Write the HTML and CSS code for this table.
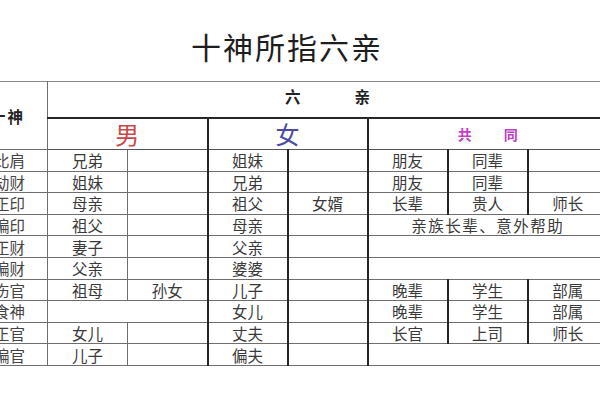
FILE: index.html
```html
<!DOCTYPE html>
<html lang="zh">
<head>
<meta charset="utf-8">
<link rel="stylesheet" href="styles.css">
</head>
<body>
<div class="sheet">
  <h1 class="title">十神所指六亲</h1>
  <table class="grid">
    <colgroup>
      <col class="c"><col class="c"><col class="c"><col class="c"><col class="c"><col class="c"><col class="c"><col class="c">
    </colgroup>
    <tr class="h1">
      <td class="label-hd" rowspan="2">十神</td>
      <td class="liuqin" colspan="7"><span class="lq">六</span><span>亲</span></td>
    </tr>
    <tr class="h2">
      <td class="male" colspan="2">男</td>
      <td class="female tl" colspan="2">女</td>
      <td class="common tl" colspan="3"><span class="gt">共</span><span>同</span></td>
    </tr>
    <tr class="r">
      <td class="lab">比肩</td><td class="tn">兄弟</td><td></td>
      <td class="tl">姐妹</td><td class="tl"></td>
      <td class="tl">朋友</td><td class="tl">同辈</td><td class="tl"></td>
    </tr>
    <tr class="r">
      <td class="lab">劫财</td><td class="tn">姐妹</td><td></td>
      <td class="tl">兄弟</td><td class="tl"></td>
      <td class="tl">朋友</td><td class="tl">同辈</td><td class="tl"></td>
    </tr>
    <tr class="r">
      <td class="lab">正印</td><td class="tn">母亲</td><td></td>
      <td class="tl">祖父</td><td class="tl">女婿</td>
      <td class="tl">长辈</td><td class="tl">贵人</td><td class="tl">师长</td>
    </tr>
    <tr class="r">
      <td class="lab">偏印</td><td class="tn">祖父</td><td></td>
      <td class="tl">母亲</td><td class="tl"></td>
      <td class="tl wide" colspan="3">亲族长辈、意外帮助</td>
    </tr>
    <tr class="r">
      <td class="lab">正财</td><td class="tn">妻子</td><td></td>
      <td class="tl">父亲</td><td class="tl"></td>
      <td class="tl" colspan="3"></td>
    </tr>
    <tr class="r">
      <td class="lab">偏财</td><td class="tn">父亲</td><td></td>
      <td class="tl">婆婆</td><td class="tl"></td>
      <td class="tl" colspan="3"></td>
    </tr>
    <tr class="r">
      <td class="lab">伤官</td><td class="tn">祖母</td><td>孙女</td>
      <td class="tl">儿子</td><td class="tl"></td>
      <td class="tl">晚辈</td><td class="tl">学生</td><td class="tl">部属</td>
    </tr>
    <tr class="r">
      <td class="lab">食神</td><td colspan="2"></td>
      <td class="tl">女儿</td><td class="tl"></td>
      <td class="tl">晚辈</td><td class="tl">学生</td><td class="tl">部属</td>
    </tr>
    <tr class="r">
      <td class="lab">正官</td><td class="tn">女儿</td><td></td>
      <td class="tl">丈夫</td><td class="tl"></td>
      <td class="tl">长官</td><td class="tl">上司</td><td class="tl">师长</td>
    </tr>
    <tr class="r">
      <td class="lab">偏官</td><td class="tn">儿子</td><td></td>
      <td class="tl">偏夫</td><td class="tl"></td>
      <td class="tl" colspan="3"></td>
    </tr>
  </table>
</div>
</body>
</html>
```

FILE: styles.css
```css
html, body {
  margin: 0;
  padding: 0;
  background: #ffffff;
  overflow: hidden;
}

body {
  width: 600px;
  height: 400px;
  font-family: "Noto Sans CJK SC", "Noto Sans", sans-serif;
  color: #3a3a3a;
}

.sheet {
  width: 640px;
  margin-left: -33px;
}

.title {
  margin: 0;
  height: 81px;
  box-sizing: border-box;
  padding-top: 29px;
  font-size: 30px;
  line-height: 34px;
  font-weight: 400;
  letter-spacing: 2px;
  text-align: center;
  color: #1e1e1e;
}

.grid {
  width: 640px;
  table-layout: fixed;
  border-collapse: collapse;
}

.grid col.c {
  width: 80px;
}

.grid td {
  padding: 0;
  line-height: 20px;
  font-size: 15.5px;
  text-align: center;
  border: 1px solid #6e6e6e;
  white-space: nowrap;
  overflow: hidden;
}

.grid tr.r {
  height: 21.6px;
}

.grid tr.h1 td {
  border-top: 1px solid #8a8a8a;
}

.grid tr.h1 {
  height: 36px;
}

.grid tr.h2 {
  height: 32px;
}

.label-hd {
  font-weight: 700;
  color: #222;
  letter-spacing: 2px;
}

.liuqin {
  font-weight: 700;
  color: #222;
  border-bottom: 2px solid #262626 !important;
  vertical-align: middle;
}

.liuqin span {
  display: inline-block;
  position: relative;
  top: -3px;
}

.lq {
  margin-right: 54px;
}

.grid tr.h2 td {
  line-height: 30px;
  overflow: visible;
  border-bottom: 1px solid #555;
}

.grid tr.h2 td.male {
  font-size: 24px;
  color: #c84848;
}

.grid tr.h2 td.female {
  font-size: 24px;
  color: #4a4aa6;
}

.grid tr.h2 td.common {
  font-size: 14px;
  color: #c040c8;
  font-weight: 700;
}

.gt {
  margin-right: 32px;
}

.grid td.tl {
  border-left: 2px solid #262626;
}

.grid td.tn {
  border-right: 1px solid #6e6e6e;
}

.lab {
  padding-left: 4px !important;
  color: #444;
}

.wide {
  letter-spacing: 1.5px;
}
```
